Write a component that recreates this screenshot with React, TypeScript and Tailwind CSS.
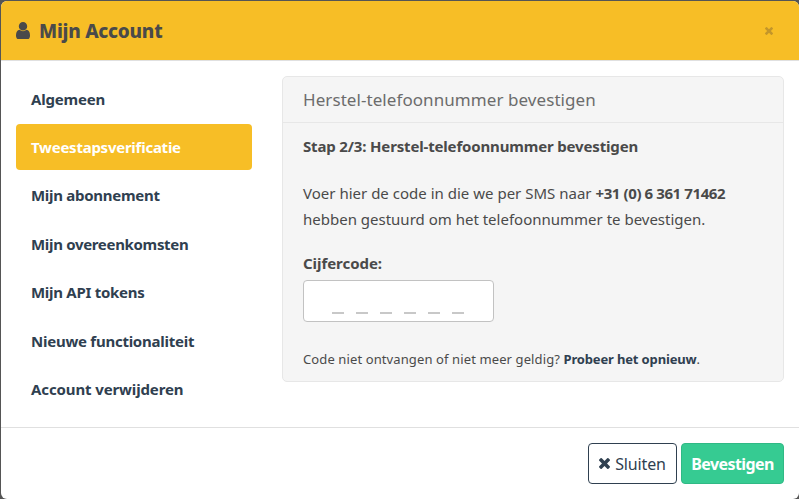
import React from "react";

const UserIcon = () => (
  <svg viewBox="0 0 1280 1536" preserveAspectRatio="none" className="h-[17px] w-[14px] fill-current">
    <path d="M1280 1271q0 109-62.5 187t-150.5 78h-854q-88 0-150.5-78t-62.5-187q0-85 8.5-160.5t31.5-152 58.5-131 94-89 134.5-34.5q131 128 313 128t313-128q76 0 134.5 34.5t94 89 58.5 131 31.5 152 8.5 160.5zm-256-887q0 159-112.5 271.5t-271.5 112.5-271.5-112.5-112.5-271.5 112.5-271.5 271.5-112.5 271.5 112.5 112.5 271.5z" />
  </svg>
);

const TimesIcon = ({ className }: { className: string }) => (
  <svg viewBox="302 366 1188 1188" className={`fill-current ${className}`}>
    <path d="M1490 1322q0 40-28 68l-136 136q-28 28-68 28t-68-28l-294-294-294 294q-28 28-68 28t-68-28l-136-136q-28-28-28-68t28-68l294-294-294-294q-28-28-28-68t28-68l136-136q28-28 68-28t68 28l294 294 294-294q28-28 68-28t68 28l136 136q28 28 28 68t-28 68l-294 294 294 294q28 28 28 68z" />
  </svg>
);

const items = [
  { label: "Algemeen", style: "tracking-[-0.18px]" },
  { label: "Tweestapsverificatie", style: "bg-[#f7be26] text-white tracking-[-0.25px]" },
  { label: "Mijn abonnement", style: "tracking-[-0.28px]" },
  { label: "Mijn overeenkomsten", style: "tracking-[-0.32px]" },
  { label: "Mijn API tokens", style: "tracking-[-0.28px]" },
  { label: "Nieuwe functionaliteit", style: "tracking-[-0.25px]" },
  { label: "Account verwijderen", style: "tracking-[-0.12px]" },
];

const App = () => {
  return (
    <div className="h-[499px] w-[799px] overflow-hidden bg-[#555] pt-px pl-px font-['Noto_Sans',sans-serif] text-base text-[#4a4a4a]">
      <div className="flex h-[498px] flex-col overflow-hidden rounded-md bg-white whitespace-nowrap">
        <header className="flex h-[60px] shrink-0 items-center border-b border-[#e0e0e0] bg-[#f7be26] pr-[26px] pl-[15px]">
          <UserIcon />
          <h1 className="ml-[9px] pt-px text-[19px] font-extrabold tracking-[-0.25px]">Mijn Account</h1>
          <button className="ml-auto pt-px text-[#c3962a]">
            <TimesIcon className="size-2" />
          </button>
        </header>

        <div className="flex h-[366px] shrink-0 px-[15px] pt-[15px]">
          <nav className="-mt-[0.2px] flex w-[236px] flex-col gap-[2.4px] text-[#2f4050]">
            {items.map((item) => (
              <a
                key={item.label}
                className={`flex h-[46px] shrink-0 items-center rounded px-[15px] text-[15px] font-bold ${item.style}`}
              >
                {item.label}
              </a>
            ))}
          </nav>

          <section className="ml-[30px] h-[306px] w-[502px] rounded-[5px] border border-[#e7e7e7] bg-[#f5f5f5]">
            <h2 className="flex h-[46px] items-center border-b border-[#e7e7e7] px-5 text-[17px] text-[#6c6c6c]">
              <span className="tracking-[0.07px]">Herstel-telefoonnummer bevestigen</span>
            </h2>
            <div className="px-5 pt-[10px] text-[15px] leading-[26px]">
              <p className="font-bold tracking-[-0.16px]">Stap 2/3: Herstel-telefoonnummer bevestigen</p>
              <p className="mt-[21px]">
                <span className="tracking-[0.01px]">Voer hier de code in die we per SMS naar </span>
                <strong className="font-bold tracking-[-0.4px]">+31 (0) 6 361 71462</strong>
                <br />
                <span>hebben gestuurd om het telefoonnummer te bevestigen.</span>
              </p>
              <p className="mt-[18px] font-bold tracking-[-0.05px]">Cijfercode:</p>
              <div className="mt-[4px] flex h-[42px] w-[191px] items-end gap-3 rounded border border-[#c2c2c2] bg-white pb-[7px] pl-7">
                {[0, 1, 2, 3, 4, 5].map((digit) => (
                  <span key={digit} className="h-0.5 w-3 bg-[#c8c8c8]" />
                ))}
              </div>
              <p className="mt-[24px] text-[13px]">
                <span className="tracking-[0.11px]">Code niet ontvangen of niet meer geldig? </span>
                <a className="font-bold tracking-[-0.15px] text-[#2f4050]">Probeer het opnieuw</a>.
              </p>
            </div>
          </section>
        </div>

        <footer className="flex flex-1 items-start justify-end gap-1 border-t border-[#e0e0e0] pt-[15px] pr-[15px]">
          <button className="flex h-[41px] w-[89px] items-center justify-center gap-[5px] rounded border border-[#2f4050] tracking-[-0.15px] text-[#2f4050]">
            <TimesIcon className="size-[11px]" />
            Sluiten
          </button>
          <button className="h-[41px] w-[103px] rounded border border-[#30b985] bg-[#36cb92] font-bold tracking-[-0.6px] text-white">
            Bevestigen
          </button>
        </footer>
      </div>
    </div>
  );
};

export default App;
